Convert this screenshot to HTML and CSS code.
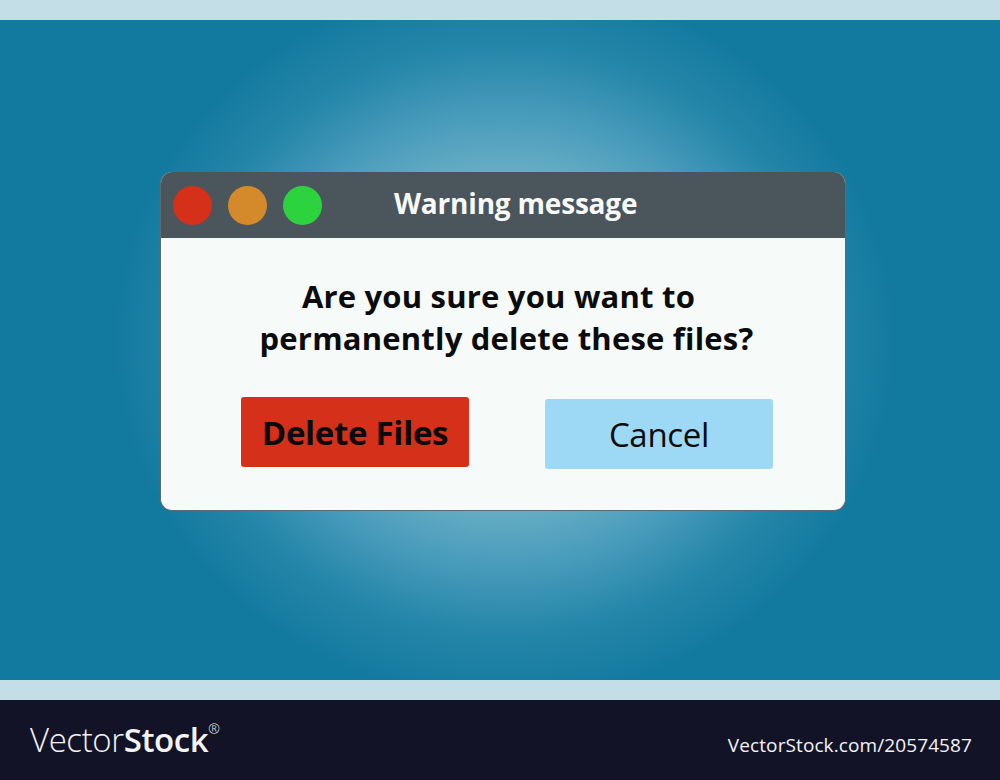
FILE: index.html
```html
<!DOCTYPE html>
<html>
<head>
<meta charset="utf-8">
<link rel="stylesheet" href="styles.css">
</head>
<body>
<div class="band"></div>
<div class="stage">
  <div class="window">
    <div class="titlebar">
      <div class="dots">
        <span class="dot red"></span>
        <span class="dot orange"></span>
        <span class="dot green"></span>
      </div>
      <div class="title">Warning message</div>
    </div>
    <div class="content">
      <p class="question"><span class="line1">Are you sure you want to</span><br>permanently delete these files?</p>
      <div class="buttons">
        <button class="btn delete">Delete Files</button>
        <button class="btn cancel">Cancel</button>
      </div>
    </div>
  </div>
</div>
<div class="band"></div>
<div class="footer">
  <div class="logo"><span class="thin">Vector</span><span class="bold">Stock</span><sup class="reg">®</sup></div>
  <div class="url">VectorStock.com/20574587</div>
</div>
</body>
</html>
```
FILE: styles.css
```css
* { box-sizing: border-box; }
html, body { margin: 0; padding: 0; }
body {
  width: 1000px;
  height: 780px;
  overflow: hidden;
  font-family: "Open Sans", "Liberation Sans", sans-serif;
}
.band { height: 20px; background: #c4dee7; }
.stage {
  height: 660px;
  background: radial-gradient(ellipse 390px 360px at 505px 320px, #88c2d5 0%, #72b4c9 40%, #4a9cbb 62%, #2486a9 82%, #137a9f 100%);
  padding-top: 152px;
  padding-left: 160px;
}
.window {
  width: 686px;
  height: 339px;
  border-radius: 12px;
  overflow: hidden;
  background: #f6fbfa;
  border: 1px solid #5f6a70;
  border-top: none;
  display: flex;
  flex-direction: column;
}
.titlebar {
  height: 66px;
  background: #4b555c;
  display: flex;
  align-items: center;
  padding-left: 12px;
}
.dots { display: flex; gap: 16px; }
.dot { width: 39px; height: 39px; border-radius: 50%; display: block; }
.red { background: #d4301a; }
.orange { background: #d4892b; }
.green { background: #2dd33f; }
.title {
  margin-left: 72px;
  color: #f8f9f9;
  font-weight: 700;
  font-size: 28px;
  letter-spacing: -0.2px;
  margin-top: -4px;
}
.content { flex: 1; display: flex; flex-direction: column; align-items: center; }
.question {
  margin: 37px 0 0 0;
  text-align: center;
  font-weight: 700;
  font-size: 31px;
  line-height: 42px;
  color: #0b0b0b;
  letter-spacing: 0.2px;
  padding-left: 7px;
}
.line1 { padding-right: 16px; }
.buttons {
  display: flex;
  align-items: flex-start;
  gap: 76px;
  margin-top: 38px;
  margin-left: 8px;
}
.btn {
  width: 228px;
  height: 70px;
  border: none;
  border-radius: 3px;
  font-family: "Open Sans", "Liberation Sans", sans-serif;
  font-size: 33px;
  color: #0b0b0b;
  padding: 0;
  letter-spacing: -0.3px;
}
.delete { background: #d4301a; font-weight: 700; }
.cancel { background: #9dd8f5; font-weight: 400; margin-top: 2px; }
.footer {
  height: 80px;
  background: #121326;
  display: flex;
  align-items: center;
  justify-content: space-between;
  padding: 0 28px 0 30px;
  color: #f4f4f6;
}
.logo { font-size: 33px; letter-spacing: -0.4px; margin-top: -2px; }
.thin { font-weight: 300; }
.bold { font-weight: 600; }
.reg { font-size: 14px; font-weight: 300; vertical-align: top; position: relative; top: 2px; }
.url { font-size: 19px; margin-top: 10px; letter-spacing: 0.1px; }
```
